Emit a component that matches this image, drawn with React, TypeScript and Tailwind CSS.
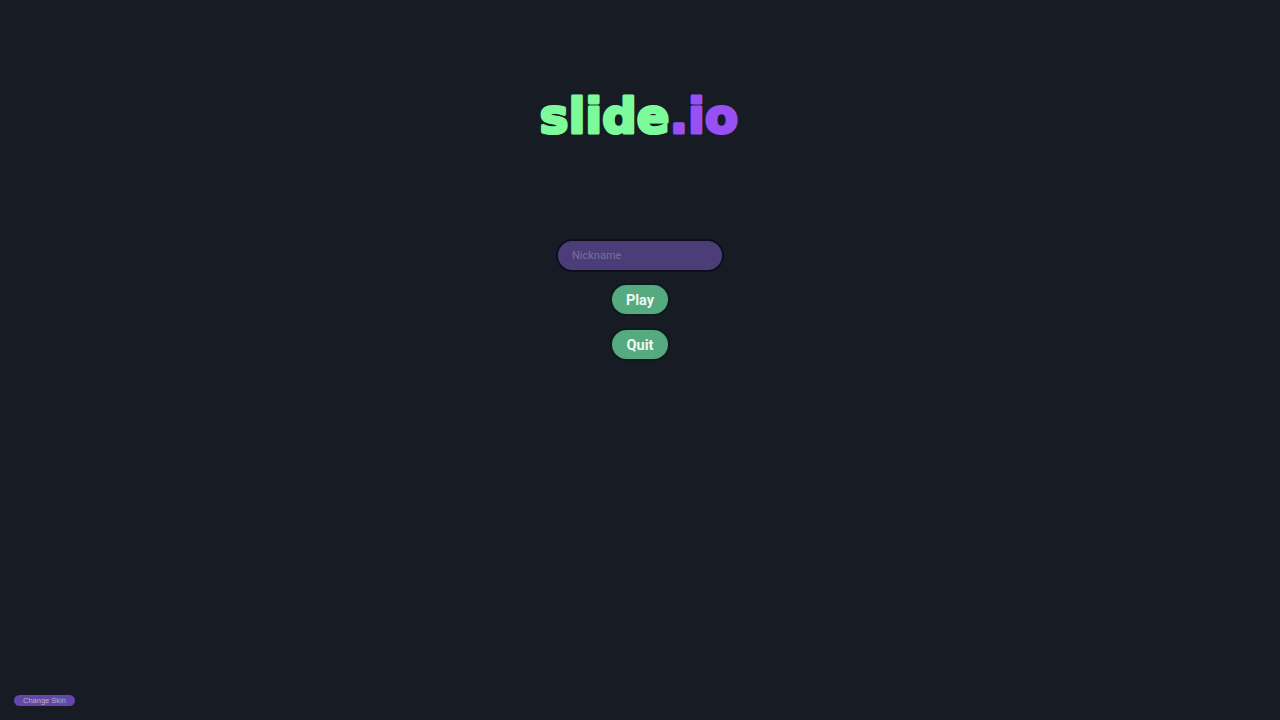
export default function App() {
  return (
    <div className="relative flex flex-col items-center w-full h-screen overflow-hidden bg-[#171b24] font-['Roboto',sans-serif]">
      {/* Logo */}
      <svg width="210" height="60" viewBox="0 0 210 60" className="mt-[84px] shrink-0">
        <text
          x="104"
          y="48.5"
          textAnchor="middle"
          fontFamily="'DejaVu Sans', sans-serif"
          fontSize="48"
          fontWeight="700"
          letterSpacing="0.3"
          strokeWidth="3.2"
          strokeLinejoin="round"
          fill="#7dfb9b"
          stroke="#7dfb9b"
        >
          slide
          <tspan fill="#9850f5" stroke="#9850f5">.io</tspan>
        </text>
      </svg>

      <input
        placeholder="Nickname"
        className="mt-[95px] w-[168px] h-[33px] px-[14px] rounded-full bg-[#4b3e78] border-2 border-[#0d0f1c] text-[11px] text-white outline-none placeholder:text-[#756f96]"
      />
      <button className="mt-[11px] w-[60px] h-[33px] pt-[2px] rounded-full bg-[#55ab7f] border-2 border-[#10191c] text-[14.5px] font-bold text-[#f1f7f3]">
        Play
      </button>
      <button className="mt-[12px] w-[60px] h-[33px] pt-[2px] rounded-full bg-[#55ab7f] border-2 border-[#10191c] text-[14.5px] font-bold text-[#f1f7f3]">
        Quit
      </button>

      {/* Skin button, pinned to the corner */}
      <button className="absolute left-[14px] bottom-[14px] w-[61px] h-[11px] rounded-full bg-[#6347ab] font-['Liberation_Sans',sans-serif] text-[7.5px] leading-[11px] text-[#b5b2c2]">
        Change Skin
      </button>
    </div>
  );
}
